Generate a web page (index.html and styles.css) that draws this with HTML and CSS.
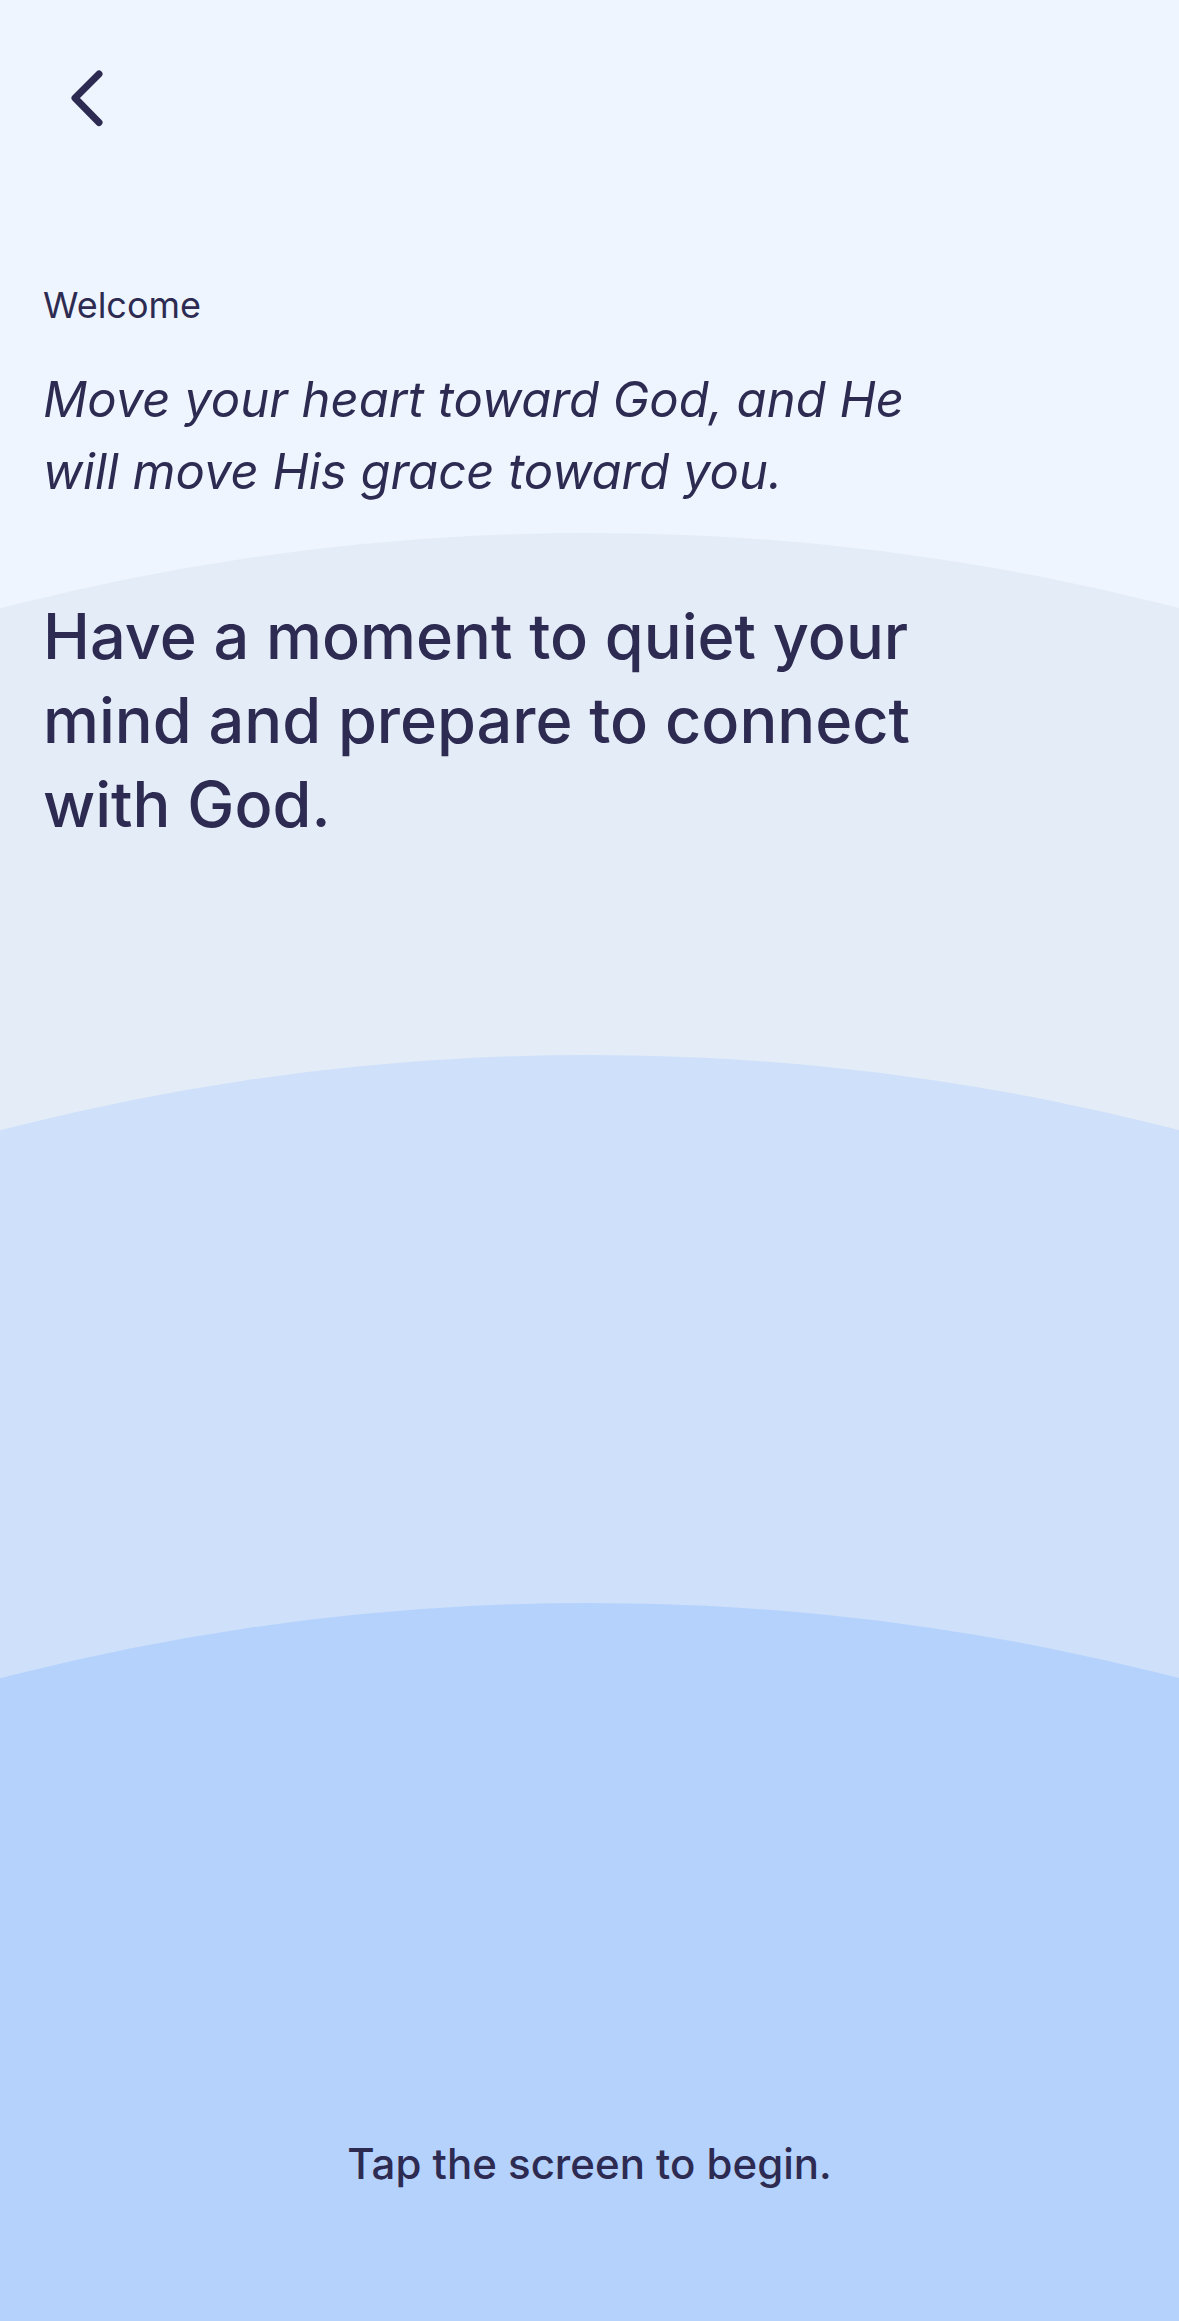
FILE: index.html
```html
<!DOCTYPE html>
<html lang="en">
<head>
<meta charset="utf-8">
<title>Welcome</title>
<link rel="stylesheet" href="styles.css">
</head>
<body>
<main class="screen">
  <div class="waves" aria-hidden="true">
    <div class="arc arc-1"></div>
    <div class="arc arc-2"></div>
    <div class="arc arc-3"></div>
  </div>
  <header class="topbar">
    <button class="back" aria-label="Back">
      <svg width="48" height="64" viewBox="0 0 48 64" fill="none">
        <path d="M36 8 L12 32 L36 56.5" stroke="#2d2b52" stroke-width="7" stroke-linecap="round" stroke-linejoin="round"/>
      </svg>
    </button>
  </header>
  <section class="content">
    <p class="eyebrow">Welcome</p>
    <p class="quote">Move your heart toward God, and He will move His grace toward you.</p>
    <h1 class="headline">Have a moment to quiet your mind and prepare to connect with God.</h1>
  </section>
  <p class="hint">Tap the screen to begin.</p>
</main>
</body>
</html>
```
FILE: styles.css
```css
html, body {
  margin: 0;
  padding: 0;
}
body {
  font-family: Inter, "Noto Sans", "Liberation Sans", sans-serif;
  color: #2d2b52;
  background: #eff5fe;
}
.screen {
  position: relative;
  width: 1179px;
  height: 2321px;
  overflow: hidden;
  background: #eff5fe;
  display: flex;
  flex-direction: column;
}
.waves {
  position: absolute;
  inset: 0;
  z-index: 0;
}
.arc {
  position: absolute;
  left: -1760.5px;
  width: 4700px;
  height: 4700px;
  border-radius: 50%;
}
.arc-1 { top: 533px; background: #e4ecf7; }
.arc-2 { top: 1055px; background: #cee0fa; }
.arc-3 { top: 1603px; background: #b5d2fc; }

.topbar, .content, .hint {
  position: relative;
  z-index: 1;
}
.topbar {
  padding: 66px 0 0 63px;
  height: 64px;
}
.back {
  display: block;
  padding: 0;
  margin: 0;
  border: 0;
  background: none;
  width: 48px;
  height: 64px;
}
.back svg { display: block; }
.content {
  padding: 0 43px;
  margin-top: 153px;
}
.eyebrow {
  margin: 0;
  font-size: 36px;
  line-height: 44px;
  font-weight: 400;
}
.quote {
  margin: 37px 0 0;
  max-width: 900px;
  font-size: 49px;
  line-height: 72px;
  font-style: italic;
  font-weight: 400;
}
.headline {
  margin: 85.5px 0 0;
  max-width: 900px;
  font-size: 63px;
  line-height: 84px;
  font-weight: 500;
}
.hint {
  margin: auto 0 0;
  padding-bottom: 131px;
  text-align: center;
  font-size: 42px;
  line-height: 52px;
  font-weight: 500;
}
```
